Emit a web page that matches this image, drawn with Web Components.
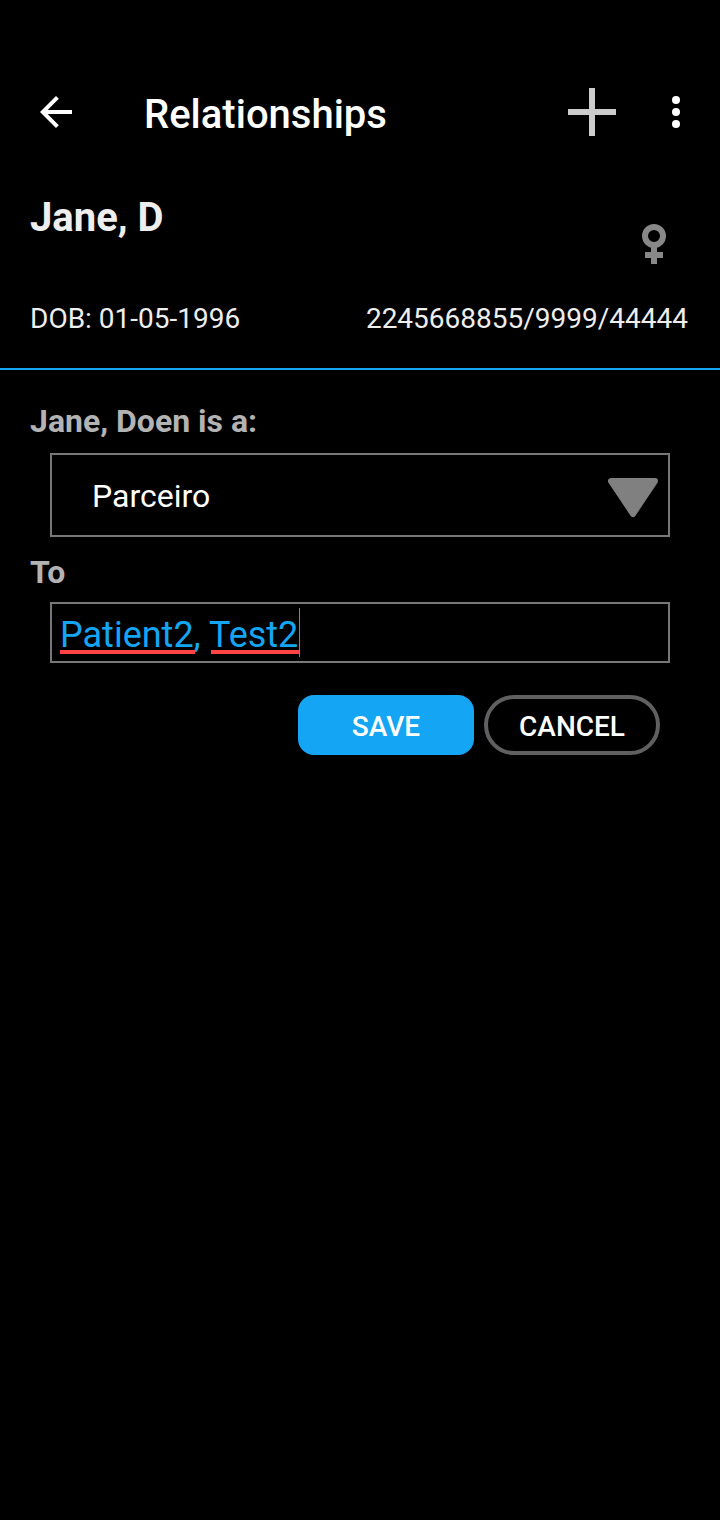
<!DOCTYPE html>
<html lang="en">
<head>
<meta charset="utf-8">
<meta name="viewport" content="width=device-width, initial-scale=1">
<title>Relationships</title>
<style>
  html { background: #000; }
  body { margin: 0; min-height: 100vh; background: #000; color: #fff; font-family: Roboto, "Liberation Sans", sans-serif; }
</style>
</head>
<body>
<relationships-page></relationships-page>
<script>
const define = (name, markup, setup) => {
  const template = document.createElement('template');
  template.innerHTML = markup;
  customElements.define(name, class extends HTMLElement {
    constructor() {
      super();
      this.attachShadow({ mode: 'open' }).append(template.content.cloneNode(true));
    }
    connectedCallback() { if (setup) setup(this, this.shadowRoot); }
  });
};

define('icon-button', `
  <style>
    :host { display: block; }
    button { display: flex; align-items: center; justify-content: center; width: 100%; height: 100%; padding: 0; border: 0; background: none; color: inherit; cursor: pointer; }
  </style>
  <button type="button"><slot></slot></button>`,
  (host, root) => root.querySelector('button').setAttribute('aria-label', host.getAttribute('label')));

define('app-toolbar', `
  <style>
    :host { display: block; padding-top: 56px; }
    header { display: flex; align-items: center; height: 112px; }
    icon-button { height: 112px; }
    .back { width: 112px; }
    .add { width: 96px; color: #ccc; }
    .more { width: 72px; margin-right: 8px; }
    h1 { flex: 1; margin: 0; padding: 6px 0 0 32px; font-size: 40px; line-height: 48px; font-weight: 500; }
    svg { display: block; }
  </style>
  <header>
    <icon-button class="back" label="Back">
      <svg width="48" height="48" viewBox="0 0 24 24" fill="currentColor"><path d="M20 11H7.83l5.59-5.59L12 4l-8 8 8 8 1.41-1.41L7.83 13H20z"/></svg>
    </icon-button>
    <h1><slot></slot></h1>
    <icon-button class="add" label="Add">
      <svg width="48" height="48" viewBox="0 0 48 48" fill="currentColor"><path d="M21 0h6v21h21v6H27v21h-6V27H0v-6h21z"/></svg>
    </icon-button>
    <icon-button class="more" label="More options">
      <svg width="48" height="48" viewBox="0 0 24 24" fill="currentColor"><circle cx="12" cy="6" r="2"/><circle cx="12" cy="12" r="2"/><circle cx="12" cy="18" r="2"/></svg>
    </icon-button>
  </header>`);

define('patient-banner', `
  <style>
    :host { display: block; padding: 26px 32px 31px 30px; border-bottom: 2px solid #14a5f5; color: #eee; }
    .top, .bottom { display: flex; justify-content: space-between; }
    .top { height: 107px; }
    h2 { margin: 0; font-size: 40px; line-height: 48px; font-weight: 700; }
    svg { display: block; margin: 30px 20px 0 0; }
    .bottom { font-size: 28px; line-height: 36px; }
  </style>
  <div class="top">
    <h2><slot name="name"></slot></h2>
    <svg width="28" height="40" viewBox="0 0 28 40" role="img" aria-label="Female" fill="none" stroke="#888">
      <circle cx="14" cy="12" r="9" stroke-width="6"/><path d="M14 23v17M5 31h18" stroke-width="6"/>
    </svg>
  </div>
  <div class="bottom"><slot name="birth"></slot><slot name="number"></slot></div>`);

define('select-field', `
  <style>
    :host { display: block; }
    label { display: block; color: #b3b3b3; font-size: 32px; line-height: 40px; font-weight: 700; }
    .box { position: relative; margin: 12px 20px 0; }
    select { display: block; appearance: none; box-sizing: border-box; width: 100%; height: 84px; margin: 0; padding: 2px 72px 0 40px; border: 2px solid #777; border-radius: 0; background: #000; color: #fff; font: 400 32px Roboto, "Liberation Sans", sans-serif; outline: none; }
    svg { position: absolute; top: 25px; right: 12px; pointer-events: none; }
  </style>
  <label for="kind"><slot></slot></label>
  <div class="box">
    <select id="kind"><option>Parceiro</option></select>
    <svg width="50" height="40" viewBox="0 0 50 40" fill="#808080" stroke="#808080" stroke-width="6" stroke-linejoin="round"><path d="M3 3h44L25 36z"/></svg>
  </div>`);

define('person-field', `
  <style>
    :host { display: block; }
    label { display: block; color: #b3b3b3; font-size: 32px; line-height: 40px; font-weight: 700; }
    .box { position: relative; margin: 10px 20px 0; }
    input { display: block; box-sizing: border-box; width: 100%; height: 61px; margin: 0; padding: 5px 8px 0; border: 2px solid #777; border-radius: 0; background: #000; color: #14a5f5; font: 400 36px Roboto, "Liberation Sans", sans-serif; outline: none; }
    .marks { position: absolute; top: 6px; left: 10px; display: flex; align-items: flex-end; height: 46px; pointer-events: none; }
    .marks i { height: 4px; background: #ff4343; }
    .first { width: 135px; margin-right: 16px; }
    .second { width: 88px; }
    .marks .caret { align-self: flex-start; width: 1px; height: 49px; background: #14a5f5; }
  </style>
  <label for="person"><slot></slot></label>
  <div class="box">
    <input id="person" type="text" value="Patient2, Test2" spellcheck="false">
    <div class="marks" aria-hidden="true"><i class="first"></i><i class="second"></i><i class="caret"></i></div>
  </div>`);

define('pill-button', `
  <style>
    :host { display: block; width: 176px; }
    button { display: block; box-sizing: border-box; width: 100%; height: 60px; padding: 2px 0 0; border: 4px solid #606060; border-radius: 30px; background: #000; color: #fff; font: 500 28px Roboto, "Liberation Sans", sans-serif; cursor: pointer; }
    :host([primary]) button { border-color: #14a5f5; border-radius: 16px; background: #14a5f5; }
  </style>
  <button type="button"><slot></slot></button>`);

define('relationships-page', `
  <style>
    :host { display: block; }
    form { padding: 31px 30px; }
    person-field { margin-top: 15px; }
    .actions { display: flex; justify-content: flex-end; gap: 10px; padding: 32px 30px 0; }
  </style>
  <app-toolbar>Relationships</app-toolbar>
  <main>
    <patient-banner>
      <span slot="name">Jane, D</span>
      <span slot="birth">DOB: 01-05-1996</span>
      <span slot="number">2245668855/9999/44444</span>
    </patient-banner>
    <form>
      <select-field>Jane, Doen is a:</select-field>
      <person-field>To</person-field>
      <div class="actions"><pill-button primary>SAVE</pill-button><pill-button>CANCEL</pill-button></div>
    </form>
  </main>`);
</script>
</body>
</html>
